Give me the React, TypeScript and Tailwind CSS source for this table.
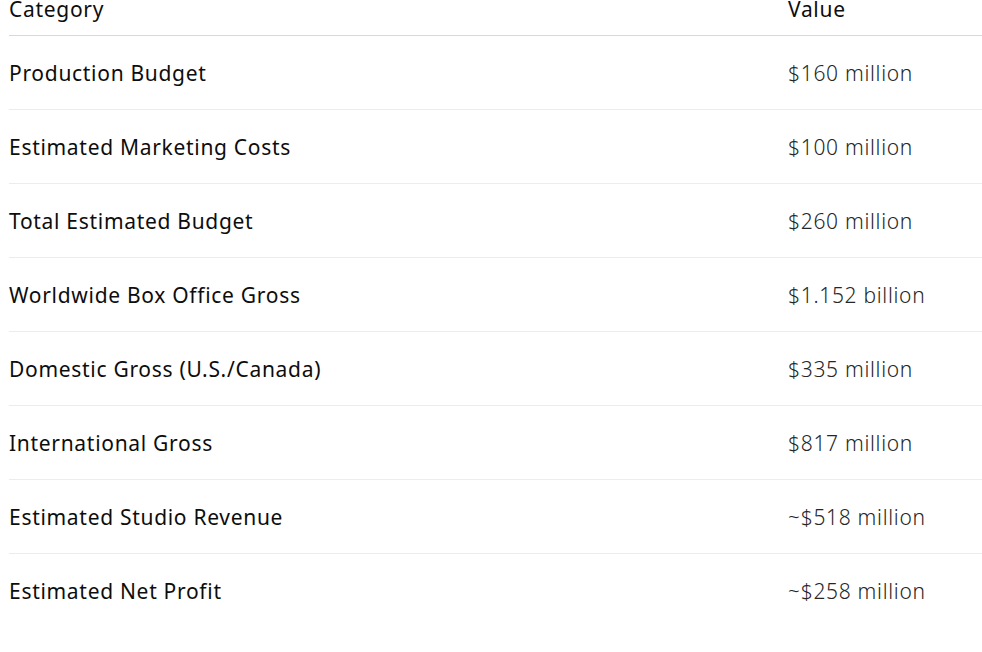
const rows = [
  { category: "Production Budget", value: "$160 million" },
  { category: "Estimated Marketing Costs", value: "$100 million" },
  { category: "Total Estimated Budget", value: "$260 million" },
  { category: "Worldwide Box Office Gross", value: "$1.152 billion" },
  { category: "Domestic Gross (U.S./Canada)", value: "$335 million" },
  { category: "International Gross", value: "$817 million" },
  { category: "Estimated Studio Revenue", value: "~$518 million" },
  { category: "Estimated Net Profit", value: "~$258 million" },
];

export default function App() {
  return (
    <div
      className="h-[652px] w-[982px] overflow-hidden bg-white pl-[9px]"
      style={{ fontFamily: '"Noto Sans", "Open Sans", sans-serif' }}
    >
      <table className="mt-[-5px] w-full border-collapse text-left text-[21px] leading-[28px] tracking-[0.7px]">
        <thead>
          <tr className="border-b border-[#d9d9d9]">
            <th className="w-[779px] pb-[12px] font-normal text-[#0d0d0d]">Category</th>
            <th className="pb-[12px] font-normal text-[#0d0d0d]">Value</th>
          </tr>
        </thead>
        <tbody>
          {rows.map((row, i) => (
            <tr
              key={row.category}
              className={i < rows.length - 1 ? "border-b border-[#ececec]" : ""}
            >
              <td className="pt-[23px] pb-[22px] text-[#0d0d0d]">{row.category}</td>
              <td className="pt-[23px] pb-[22px] font-light text-[#262626]">{row.value}</td>
            </tr>
          ))}
        </tbody>
      </table>
    </div>
  );
}
